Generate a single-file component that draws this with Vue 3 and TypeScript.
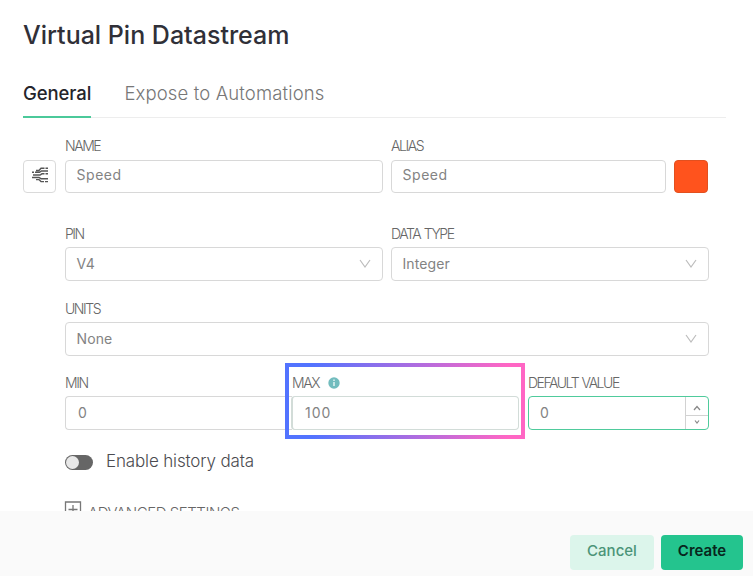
<script setup lang="ts">
import { ref } from 'vue'

const name = ref('Speed')
const alias = ref('Speed')
const min = ref('0')
const max = ref('100')
const initial = ref('0')
const tabs = ['General', 'Expose to Automations']
const activeTab = ref('General')
const history = ref(false)
</script>

<template>
  <main class="dialog">
    <section class="content">
      <h1 class="title">Virtual Pin Datastream</h1>
      <nav class="tabs">
        <button
          v-for="tab in tabs"
          :key="tab"
          class="tab"
          :class="{ active: tab === activeTab }"
          @click="activeTab = tab"
        >{{ tab }}</button>
      </nav>

      <div class="row row-name">
        <button class="icon-button" aria-label="Datastream icon">
          <svg width="18" height="18" viewBox="0 0 18 18" fill="none" stroke="#555" stroke-width="1.4">
            <path d="M5 4.500h3l2-2.300h3.500M14.500 2.200h2.500M1 6.300h2M4 6.300h4.500l2-1.300h6.500M2 9h7l2-1.200h2.500M14.500 7.800h2.500M1 11.500h7l2 1.200h7M5 13.600h3l2 2h3M14 15.600h3" />
          </svg>
        </button>
        <div class="field name">
          <label>NAME</label>
          <input v-model="name" class="box" />
        </div>
        <div class="field alias">
          <label>ALIAS</label>
          <input v-model="alias" class="box" />
        </div>
        <button class="swatch" aria-label="Color"></button>
      </div>

      <div class="row row-pin">
        <div class="field half">
          <label>PIN</label>
          <div class="box select">
            <span>V4</span>
            <svg class="chevron" width="12" height="10" viewBox="0 0 12 10"><path d="M1 1l5 7 5-7" /></svg>
          </div>
        </div>
        <div class="field half">
          <label>DATA TYPE</label>
          <div class="box select">
            <span>Integer</span>
            <svg class="chevron" width="12" height="10" viewBox="0 0 12 10"><path d="M1 1l5 7 5-7" /></svg>
          </div>
        </div>
      </div>

      <div class="row row-units">
        <div class="field full">
          <label>UNITS</label>
          <div class="box select">
            <span>None</span>
            <svg class="chevron" width="12" height="10" viewBox="0 0 12 10"><path d="M1 1l5 7 5-7" /></svg>
          </div>
        </div>
      </div>

      <div class="row row-range">
        <div class="field min">
          <label>MIN</label>
          <input v-model="min" class="box number" />
        </div>
        <div class="field max">
          <label>
            <span>MAX</span>
            <svg class="info" width="12" height="12" viewBox="0 0 12 12">
              <circle cx="6" cy="6" r="5.700" fill="#72bcbe" />
              <path d="M6 2.500v1.500M6 5v4" stroke="#e3f4f4" stroke-width="1.500" />
            </svg>
          </label>
          <input v-model="max" class="box number" />
          <div class="highlight"></div>
        </div>
        <div class="field default">
          <label>DEFAULT VALUE</label>
          <div class="box stepper">
            <input v-model="initial" />
            <div class="steps">
              <button aria-label="Increase"><svg width="8" height="6" viewBox="0 0 8 6"><path d="M1 5l3-3.500 3 3.500" /></svg></button>
              <button aria-label="Decrease"><svg width="8" height="6" viewBox="0 0 8 6"><path d="M2 1.500l2 2.500 2-2.500" /></svg></button>
            </div>
          </div>
        </div>
      </div>

      <div class="history">
        <button class="switch" :class="{ on: history }" aria-label="Enable history data" @click="history = !history"></button>
        <span>Enable history data</span>
      </div>

      <div class="advanced">
        <svg width="18" height="18" viewBox="0 0 18 18" fill="none" stroke="#777" stroke-width="1.300">
          <path d="M1.500 1h15v15h-15zM9 4v9M4.500 8.500h9" />
        </svg>
        <span>ADVANCED SETTINGS</span>
      </div>
    </section>
    <footer class="footer">
      <button class="action cancel">Cancel</button>
      <button class="action create">Create</button>
    </footer>
  </main>
</template>

<style>
body {
  background: #fff;
}
</style>

<style scoped>
* {
  box-sizing: border-box;
}
button,
input {
  font: inherit;
  margin: 0;
  padding: 0;
  outline: none;
}
.dialog {
  width: 753px;
  height: 576px;
  display: flex;
  flex-direction: column;
  font-family: Inter, 'Liberation Sans', sans-serif;
  color: #838383;
}
.content {
  height: 511px;
  padding: 17px 27px 0 23px;
  overflow: hidden;
}
.title {
  margin: 0;
  height: 36px;
  line-height: 36px;
  font-size: 25px;
  font-weight: 500;
  letter-spacing: 0;
  color: #303038;
}
.tabs {
  display: flex;
  gap: 33px;
  height: 65px;
  border-bottom: 1px solid #ededed;
}
.tab {
  height: 65px;
  padding: 16px 0 0;
  border: 0;
  border-bottom: 2px solid transparent;
  background: none;
  font-size: 18.5px;
  line-height: 22px;
  font-weight: 300;
  letter-spacing: 0.14px;
  color: #777;
}
.tab.active {
  border-color: #4bc99a;
  color: #25252b;
  font-weight: 500;
  letter-spacing: -0.08px;
}
.row {
  display: flex;
  padding-left: 42px;
}
.row-name {
  padding: 20px 0 0;
  align-items: flex-end;
  height: 75px;
}
.row-pin {
  gap: 8px;
  margin-top: 33px;
}
.row-units {
  margin-top: 20px;
}
.row-range {
  margin-top: 19px;
}
.field label {
  display: flex;
  align-items: center;
  height: 15px;
  margin-bottom: 6px;
  font-size: 14px;
  font-weight: 300;
  letter-spacing: -1.45px;
  word-spacing: 1px;
  color: #666;
  white-space: nowrap;
}
.row-name label {
  margin-bottom: 7px;
}
.name {
  width: 318px;
  margin-left: 9px;
}
.alias {
  width: 275px;
  margin: 0 8px;
}
.half {
  width: 318px;
}
.full {
  width: 644px;
}
.box {
  display: block;
  width: 100%;
  height: 34px;
  padding: 0 11px 3px 10.5px;
  border: 1.5px solid #d8d8d8;
  border-radius: 4px;
  background: #fff;
  color: #838383;
  font-size: 14px;
  letter-spacing: 0.55px;
}
.row-name .box {
  height: 33px;
  padding-bottom: 4px;
}
.select {
  display: flex;
  align-items: center;
  justify-content: space-between;
  padding-bottom: 1px;
  padding-right: 11px;
  letter-spacing: 0.1px;
}
.row-units .select {
  padding-bottom: 2px;
}
.chevron {
  margin-top: 1px;
  fill: none;
  stroke: #bdbdbd;
  stroke-width: 1.2;
}
.icon-button,
.swatch {
  flex: none;
  width: 33px;
  height: 33px;
  border: 1.5px solid #dadada;
  border-radius: 4px;
  background: #fff;
}
.icon-button {
  display: grid;
  place-items: center;
  padding-bottom: 4px;
}
.swatch {
  width: 34px;
  background: #ff531d;
  border-color: #e2501f;
}
.min {
  width: 227px;
}
.box.number {
  padding-left: 12px;
  padding-bottom: 2px;
  letter-spacing: 1px;
}
.min .number {
  border-right: 0;
  border-radius: 4px 0 0 4px;
}
.max {
  position: relative;
  width: 227px;
}
.max .number {
  width: 228px;
  margin-left: -1px;
  border-color: #d2dcd8;
  border-left-width: 2px;
}
.info {
  margin-left: 9px;
}
.highlight {
  position: absolute;
  left: -7px;
  top: -12px;
  width: 240px;
  height: 76px;
  border: 4px solid;
  border-image: linear-gradient(90deg, #5273ff 10%, #ff66c4 94%) 1;
  pointer-events: none;
}
.default {
  width: 181px;
  margin-left: 9px;
}
.stepper {
  display: flex;
  padding: 0;
  border-width: 1px;
  border-color: #4fcb9c;
}
.stepper input {
  flex: 1;
  min-width: 0;
  border: 0;
  padding: 0 0 2px 11px;
  background: none;
  color: #838383;
}
.steps {
  display: flex;
  flex-direction: column;
  width: 23px;
  border-left: 1px solid #d2d2d2;
}
.steps button {
  display: grid;
  place-items: center;
  flex: 1;
  border: 0;
  background: none;
}
.steps button:first-child {
  padding-top: 4px;
}
.steps button + button {
  border-top: 1px solid #d2d2d2;
}
.steps path {
  fill: none;
  stroke: #888;
  stroke-width: 1.2;
}
.history {
  display: flex;
  align-items: center;
  gap: 13px;
  margin: 20px 0 0 42px;
  height: 22px;
  font-size: 17px;
  font-weight: 300;
  letter-spacing: -0.15px;
  color: #4b4b50;
}
.switch {
  width: 28px;
  height: 15px;
  margin-top: 2px;
  padding: 1px;
  border: 0;
  border-radius: 8px;
  background: #666;
}
.switch::before {
  content: '';
  display: block;
  width: 13px;
  height: 13px;
  border-radius: 50%;
  background: #e8e8e8;
}
.switch.on::before {
  margin-left: 13px;
}
.advanced {
  display: flex;
  align-items: flex-start;
  gap: 6px;
  margin: 29px 0 0 41px;
  font-size: 15px;
  font-weight: 300;
  letter-spacing: -0.45px;
  line-height: 24px;
  color: #666;
}
.footer {
  display: flex;
  justify-content: flex-end;
  gap: 7px;
  height: 65px;
  padding: 24px 10px 0 0;
  background: #fafafa;
}
.action {
  height: 35px;
  padding-bottom: 4px;
  border: 0;
  border-radius: 4px;
  font-size: 15px;
  font-weight: 500;
}
.cancel {
  width: 84px;
  background: #dcf5eb;
  color: #4b9478;
}
.create {
  width: 82px;
  background: #24c48e;
  color: #08261c;
  font-weight: 600;
}
</style>
